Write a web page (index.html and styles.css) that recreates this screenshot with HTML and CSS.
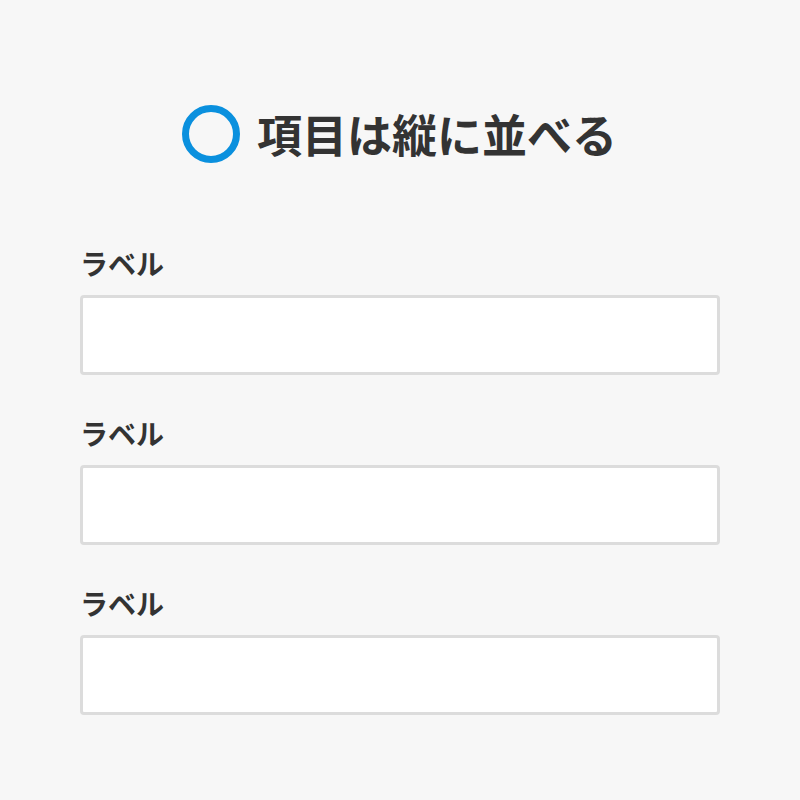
FILE: index.html
```html
<!DOCTYPE html>
<html lang="ja">
<head>
<meta charset="utf-8">
<link rel="stylesheet" href="styles.css">
</head>
<body>
<main class="page">
  <h1 class="title">
    <svg class="mark" width="58" height="58" viewBox="0 0 58 58"><circle cx="29" cy="29" r="25.5" fill="none" stroke="#0a90de" stroke-width="7"/></svg>
    <span>項目は縦に並べる</span>
  </h1>
  <form class="form">
    <div class="field">
      <label class="label">ラベル</label>
      <input class="input" type="text">
    </div>
    <div class="field">
      <label class="label">ラベル</label>
      <input class="input" type="text">
    </div>
    <div class="field">
      <label class="label">ラベル</label>
      <input class="input" type="text">
    </div>
  </form>
</main>
</body>
</html>
```
FILE: styles.css
```css
html, body {
  margin: 0;
  padding: 0;
  background: #f7f7f7;
}
body {
  font-family: "Noto Sans CJK JP", "Noto Sans", sans-serif;
  color: #333;
}
.page {
  width: 800px;
  height: 800px;
  box-sizing: border-box;
  padding: 102px 80px 0;
}
.title {
  margin: 0 0 0 -1px;
  display: flex;
  align-items: center;
  justify-content: center;
  gap: 17px;
  height: 64px;
  font-size: 45px;
  font-weight: 700;
  line-height: 64px;
  letter-spacing: 0;
}
.mark {
  display: block;
  flex: none;
}
.form {
  margin-top: 76px;
  display: flex;
  flex-direction: column;
  gap: 37px;
}
.field {
  display: flex;
  flex-direction: column;
  gap: 11px;
}
.label {
  font-size: 28px;
  font-weight: 700;
  line-height: 42px;
  height: 42px;
}
.input {
  display: block;
  box-sizing: border-box;
  width: 640px;
  height: 80px;
  margin: 0;
  background: #fff;
  border: 3px solid #dcdcdc;
  border-radius: 4px;
  outline: none;
}
```
